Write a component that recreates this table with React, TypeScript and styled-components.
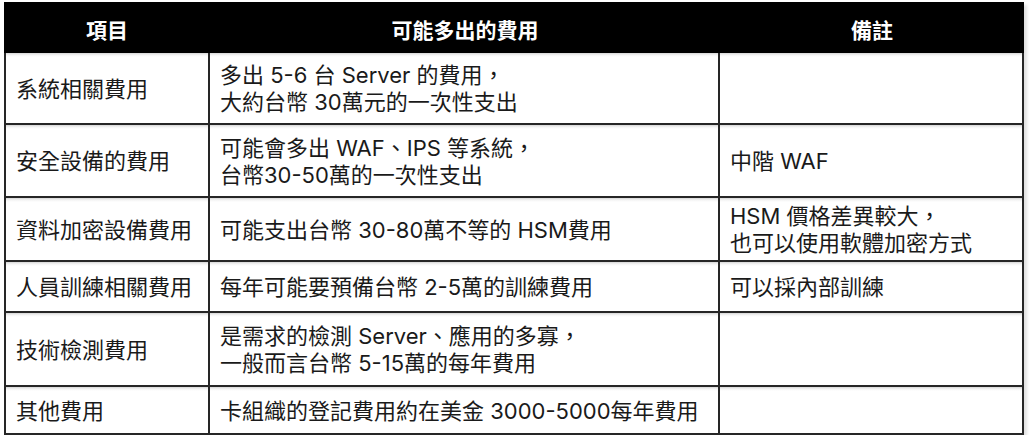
import React from 'react';
import styled, { createGlobalStyle } from 'styled-components';

const GlobalStyle = createGlobalStyle`
  html, body {
    margin: 0;
    padding: 0;
    background: #ffffff;
  }
  body {
    font-family: Inter, "Noto Sans CJK TC", "Noto Sans", sans-serif;
  }
`;

const Page = styled.div`
  padding: 2px 0 0 4px;
`;

const Table = styled.div<{ $rows: string }>`
  display: grid;
  grid-template-columns: 206px 510px 304px;
  grid-template-rows: ${(p) => p.$rows};
  width: 1020px;
  box-shadow: 3px 3px 3px rgba(0, 0, 0, 0.12);
`;

const HeaderCell = styled.div`
  background: #000000;
  color: #ffffff;
  font-size: 21px;
  font-weight: 700;
  display: flex;
  align-items: center;
  justify-content: center;
  padding-top: 2px;
  box-sizing: border-box;
`;

const Cell = styled.div<{ $first?: boolean }>`
  box-sizing: border-box;
  border-right: 2px solid #262626;
  border-bottom: 2px solid #262626;
  border-left: ${(p) => (p.$first ? '2px solid #262626' : 'none')};
  background: linear-gradient(to bottom, #d6d6d6 0px, #f4f4f4 2px, #ffffff 4px);
  display: flex;
  flex-direction: column;
  justify-content: center;
  padding: 2px 10px 0 10px;
  font-size: 22px;
  line-height: 27px;
  color: #1a1a1a;
  white-space: nowrap;
`;

const Line = styled.span`
  display: block;
  height: 27px;
`;

interface IRow {
  item: string;
  cost: string[];
  note: string[];
  height: number;
}

const rows: IRow[] = [
  {
    item: '系統相關費用',
    cost: ['多出 5-6 台 Server 的費用，', '大約台幣 30萬元的一次性支出'],
    note: [],
    height: 72,
  },
  {
    item: '安全設備的費用',
    cost: ['可能會多出 WAF、IPS 等系統，', '台幣30-50萬的一次性支出'],
    note: ['中階 WAF'],
    height: 73,
  },
  {
    item: '資料加密設備費用',
    cost: ['可能支出台幣 30-80萬不等的 HSM費用'],
    note: ['HSM 價格差異較大，', '也可以使用軟體加密方式'],
    height: 64,
  },
  {
    item: '人員訓練相關費用',
    cost: ['每年可能要預備台幣 2-5萬的訓練費用'],
    note: ['可以採內部訓練'],
    height: 51,
  },
  {
    item: '技術檢測費用',
    cost: ['是需求的檢測 Server、應用的多寡，', '一般而言台幣 5-15萬的每年費用'],
    note: [],
    height: 74,
  },
  {
    item: '其他費用',
    cost: ['卡組織的登記費用約在美金 3000-5000每年費用'],
    note: [],
    height: 48,
  },
];

export default function App() {
  const template = ['51px', ...rows.map((r) => `${r.height}px`)].join(' ');
  return (
    <Page>
      <GlobalStyle />
      <Table $rows={template}>
        <HeaderCell>項目</HeaderCell>
        <HeaderCell>可能多出的費用</HeaderCell>
        <HeaderCell>備註</HeaderCell>
        {rows.map((row) => (
          <React.Fragment key={row.item}>
            <Cell $first>
              <Line>{row.item}</Line>
            </Cell>
            <Cell>
              {row.cost.map((t) => (
                <Line key={t}>{t}</Line>
              ))}
            </Cell>
            <Cell>
              {row.note.map((t) => (
                <Line key={t}>{t}</Line>
              ))}
            </Cell>
          </React.Fragment>
        ))}
      </Table>
    </Page>
  );
}
